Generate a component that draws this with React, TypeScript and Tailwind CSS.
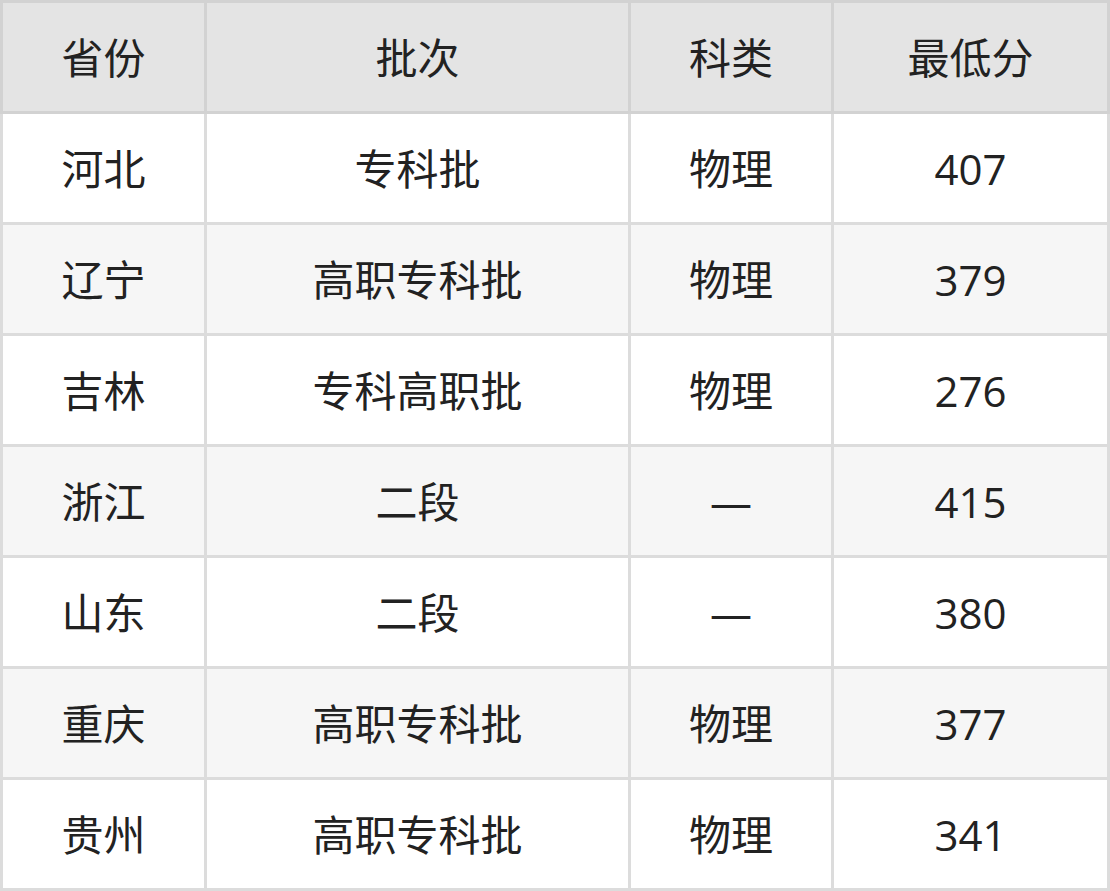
const rows = [
  ["河北", "专科批", "物理", "407"],
  ["辽宁", "高职专科批", "物理", "379"],
  ["吉林", "专科高职批", "物理", "276"],
  ["浙江", "二段", "—", "415"],
  ["山东", "二段", "—", "380"],
  ["重庆", "高职专科批", "物理", "377"],
  ["贵州", "高职专科批", "物理", "341"],
];

const cols = "grid grid-cols-[201px_421px_200px_273px] gap-[3px]";

export default function App() {
  return (
    <div
      className="w-[1110px] text-[42px] text-[#222]"
      style={{ fontFamily: '"Open Sans", "Noto Sans CJK SC", sans-serif' }}
    >
      {/* Header */}
      <div className={`${cols} bg-[#d2d2d2] p-[3px]`}>
        {["省份", "批次", "科类", "最低分"].map((h) => (
          <div key={h} className="h-[108px] bg-[#e4e4e4] flex items-center justify-center">
            {h}
          </div>
        ))}
      </div>

      {/* Body */}
      <div className={`${cols} bg-[#dcdcdc] px-[3px] pb-[3px]`}>
        {rows.map((r, i) =>
          r.map((c, j) => (
            <div
              key={`${i}-${j}`}
              className={`h-[108px] flex items-center justify-center ${i % 2 === 0 ? "bg-white" : "bg-[#f6f6f6]"}`}
            >
              {c}
            </div>
          ))
        )}
      </div>
    </div>
  );
}
